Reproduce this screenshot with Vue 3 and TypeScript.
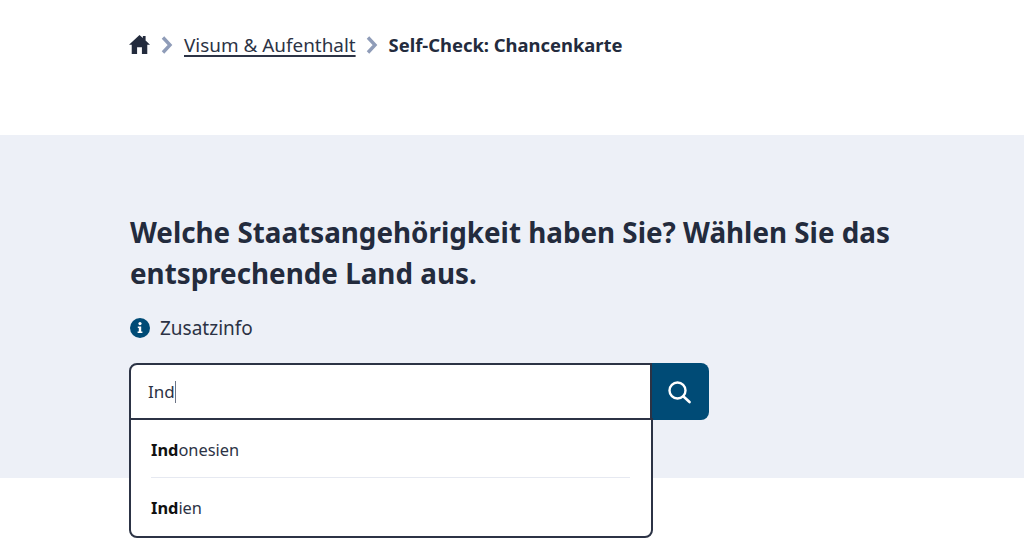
<script setup lang="ts">
const options = [
  { match: 'Ind', rest: 'onesien' },
  { match: 'Ind', rest: 'ien' },
]
</script>

<template>
  <div class="page">
    <nav class="crumbs">
      <svg class="home" viewBox="0 0 20 18" width="20" height="18" aria-hidden="true">
        <path d="M10 0 L13.2 2.9 V1 H15.8 V5.3 L20 9.2 L17.4 9.2 L17.4 18 L12.3 18 L12.3 11.5 L7.7 11.5 L7.7 18 L2.6 18 L2.6 9.2 L0 9.2 Z" fill="#232b3d" />
      </svg>
      <svg class="chev first" viewBox="0 0 14 20" width="14" height="20" aria-hidden="true">
        <path d="M3 2.5 L10 10 L3 17.5" fill="none" stroke="#8f9cb8" stroke-width="3.4" />
      </svg>
      <a class="link">Visum &amp; Aufenthalt</a>
      <svg class="chev second" viewBox="0 0 14 20" width="14" height="20" aria-hidden="true">
        <path d="M3 2.5 L10 10 L3 17.5" fill="none" stroke="#8f9cb8" stroke-width="3.4" />
      </svg>
      <strong class="current">Self-Check: Chancenkarte</strong>
    </nav>

    <section class="band">
      <h1>Welche Staatsangehörigkeit haben Sie? Wählen Sie das entsprechende Land aus.</h1>
      <div class="info">
        <svg viewBox="0 0 20 20" width="20" height="20" aria-hidden="true">
          <circle cx="10" cy="10" r="10" fill="#004b76" />
          <circle cx="10" cy="5.6" r="1.6" fill="#fff" />
          <path d="M7.8 8.4 H11.2 V13.4 H12.4 V15 H7.6 V13.4 H8.8 V10 H7.8 Z" fill="#fff" />
        </svg>
        <span>Zusatzinfo</span>
      </div>
      <div class="search">
        <div class="field">
          <span>Ind</span><i class="caret"></i>
        </div>
        <button class="go" type="button" aria-label="Suchen">
          <svg viewBox="0 0 24 24" width="24" height="24" aria-hidden="true">
            <circle cx="10.5" cy="10.5" r="8" fill="none" stroke="#fff" stroke-width="2.4" />
            <path d="M16.5 16.5 L22.5 22" fill="none" stroke="#fff" stroke-width="2.6" stroke-linecap="round" />
          </svg>
        </button>
        <ul class="menu">
          <li v-for="o in options" :key="o.rest"><b>{{ o.match }}</b>{{ o.rest }}</li>
        </ul>
      </div>
    </section>
  </div>
</template>

<style>
html, body { margin: 0; background: #fff; overflow: hidden; }
</style>

<style scoped>
.page {
  height: 552px;
  font-family: "Noto Sans", "Open Sans", sans-serif;
  color: #2c3345;
  overflow: hidden;
}
.crumbs {
  height: 135px;
  box-sizing: border-box;
  padding: 35px 0 0 129px;
  display: flex;
  align-items: flex-start;
  font-size: 18.9px;
  line-height: 21px;
}
.home { margin-top: 0; width: 21px; height: 19px; }
.chev { margin-top: 0; }
.chev.first { margin-left: 10px; margin-right: 10px; }
.chev.second { margin-left: 9px; margin-right: 10px; }
.link {
  color: #2c3345;
  text-decoration: underline;
  text-decoration-thickness: 2px;
  text-underline-offset: 3px;
}
.current { font-weight: 700; font-size: 18.4px; line-height: 20px; color: #232b3d; }
.band {
  height: 343px;
  background: #edf0f7;
  box-sizing: border-box;
  padding: 77px 130px 0;
}
h1 {
  margin: 0;
  width: 780px;
  font-size: 27.8px;
  line-height: 41px;
  font-weight: 700;
  color: #232b3d;
}
.info {
  margin-top: 22px;
  display: flex;
  align-items: center;
  gap: 10px;
  font-size: 19px;
  line-height: 24px;
}
.search {
  position: relative;
  margin: 23px 0 0 -1px;
  width: 580px;
  display: flex;
  height: 57px;
}
.field {
  width: 523px;
  box-sizing: border-box;
  background: #fff;
  border: 2px solid #2c3345;
  border-radius: 8px 0 0 0;
  padding-left: 17px;
  display: flex;
  align-items: center;
  font-size: 17px;
}
.caret {
  width: 1px;
  height: 22px;
  background: #6c7486;
  display: block;
}
.go {
  flex: 1;
  border: 0;
  padding: 0 3px 0 0;
  background: #004b76;
  border-radius: 0 8px 8px 0;
  display: flex;
  align-items: center;
  justify-content: center;
}
.menu {
  position: absolute;
  left: 0;
  top: 55px;
  width: 524px;
  height: 120px;
  box-sizing: border-box;
  margin: 0;
  padding: 0 21px 0 20px;
  list-style: none;
  background: #fff;
  border: 2px solid #2c3345;
  border-radius: 0 0 8px 8px;
  font-size: 16.4px;
}
.menu li {
  height: 58px;
  box-sizing: border-box;
  display: flex;
  align-items: center;
}
.menu li:first-child { border-bottom: 1px solid #e6e9f1; padding-top: 1px; }
.menu b { color: #111; font-weight: 700; }
</style>
